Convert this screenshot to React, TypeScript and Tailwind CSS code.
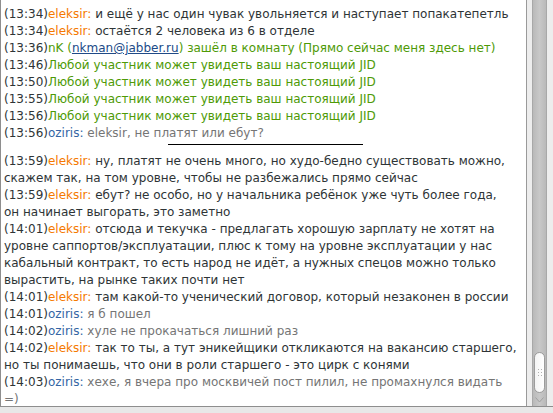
import React from "react";

type Seg = { t: string; c: string; u?: boolean };
type Row = { segs: Seg[] } | { divider: true };

const TS = "text-[#2e3436]";
const ELK = "text-[#f57900]";
const OZ = "text-[#3465a4]";
const MSG = "text-[#2e3436]";
const OZMSG = "text-[#757575]";
const SYS = "text-[#4e9a06]";

const el = (time: string, text: string): Seg[] => [
  { t: `(${time})`, c: TS },
  { t: "eleksir: ", c: ELK },
  { t: text, c: MSG },
];
const oz = (time: string, text: string): Seg[] => [
  { t: `(${time})`, c: TS },
  { t: "oziris: ", c: OZ },
  { t: text, c: OZMSG },
];
const sys = (time: string): Seg[] => [
  { t: `(${time})`, c: TS },
  { t: "Любой участник может увидеть ваш настоящий JID", c: SYS },
];
const cont = (text: string, c = MSG): Seg[] => [{ t: text, c }];

const rows: Row[] = [
  { segs: el("13:34", "и ещё у нас один чувак увольняется и наступает попакатепетль") },
  { segs: el("13:34", "остаётся 2 человека из 6 в отделе") },
  {
    segs: [
      { t: "(13:36)", c: TS },
      { t: "nK (", c: SYS },
      { t: "nkman@jabber.ru", c: "text-[#204a87]", u: true },
      { t: ") зашёл в комнату (Прямо сейчас меня здесь нет)", c: SYS },
    ],
  },
  { segs: sys("13:46") },
  { segs: sys("13:50") },
  { segs: sys("13:55") },
  { segs: sys("13:56") },
  { segs: oz("13:56", "eleksir, не платят или ебут?") },
  { divider: true },
  { segs: el("13:59", "ну, платят не очень много, но худо-бедно существовать можно,") },
  { segs: cont("скажем так, на том уровне, чтобы не разбежались прямо сейчас") },
  { segs: el("13:59", "ебут? не особо, но у начальника ребёнок уже чуть более года,") },
  { segs: cont("он начинает выгорать, это заметно") },
  { segs: el("14:01", "отсюда и текучка - предлагать хорошую зарплату не хотят на") },
  { segs: cont("уровне саппортов/эксплуатации, плюс к тому на уровне эксплуатации у нас") },
  { segs: cont("кабальный контракт, то есть народ не идёт, а нужных спецов можно только") },
  { segs: cont("вырастить, на рынке таких почти нет") },
  { segs: el("14:01", "там какой-то ученический договор, который незаконен в россии") },
  { segs: oz("14:01", "я б пошел") },
  { segs: oz("14:02", "хуле не прокачаться лишний раз") },
  { segs: el("14:02", "так то ты, а тут эникейщики откликаются на вакансию старшего,") },
  { segs: cont("но ты понимаешь, что они в роли старшего - это цирк с конями") },
  { segs: oz("14:03", "хехе, я вчера про москвичей пост пилил, не промахнулся видать") },
  { segs: cont("=)", OZMSG) },
];

function Scrollbar() {
  return (
    <div className="w-[27px] h-full flex bg-[#ededed] border-l border-[#9a9a9a]">
      <div className="w-[5px]" />
      <div className="w-[15px] h-full flex flex-col border-x border-[#a8a8a8] bg-gradient-to-r from-[#b9b9b9] via-[#c8c8c8] to-[#b9b9b9]">
        <div className="flex-1" />
        <div className="h-[41px] mx-px rounded-[6px] bg-gradient-to-r from-[#f4f4f4] to-[#ffffff] border border-[#9c9c9c] flex items-center justify-center">
          <div className="grid grid-cols-2 gap-[2px]">
            {[0, 1, 2, 3, 4, 5].map((i) => (
              <span key={i} className="w-px h-px bg-[#b0b0b0]" />
            ))}
          </div>
        </div>
        <div className="h-[13px] flex items-center justify-center">
          <svg width="9" height="6" viewBox="0 0 9 6">
            <path d="M0.5 0.5 L4.5 5 L8.5 0.5" fill="none" stroke="#a0a0a0" strokeWidth="1" />
          </svg>
        </div>
      </div>
    </div>
  );
}

export default function App() {
  return (
    <div className="w-[553px] h-[413px] bg-[#e8e8e8] flex flex-col overflow-hidden font-['DejaVu_Sans',sans-serif] text-[12px] leading-[17px]">
      <div className="h-[407px] flex border-b border-[#8e8e8e]">
        <div className="flex-1 bg-white border-l border-[#8e8e8e] overflow-hidden pl-[3px] pt-[6px]">
          {rows.map((r, i) =>
            "divider" in r ? (
              <div key={i} className="h-[11px] pt-[2px]">
                <div className="ml-[164px] w-[195px] h-px bg-black" />
              </div>
            ) : (
              <div key={i} className="whitespace-nowrap">
                {r.segs.map((s, j) => (
                  <span key={j} className={`${s.c} ${s.u ? "underline" : ""}`}>
                    {s.t}
                  </span>
                ))}
              </div>
            )
          )}
        </div>
        <Scrollbar />
      </div>
    </div>
  );
}
